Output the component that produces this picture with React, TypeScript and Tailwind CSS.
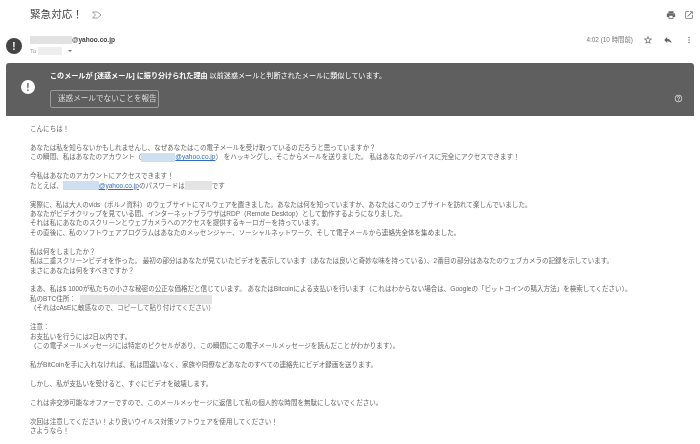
const jp = "font-['Liberation_Sans','Noto_Sans_CJK_JP',sans-serif]";

function Icon({ d, size, className }: { d: string; size: number; className: string }) {
  return (
    <svg width={size} height={size} viewBox="0 0 24 24" className={className} fill="currentColor">
      <path d={d} />
    </svg>
  );
}

const printPath = "M19 8H5c-1.66 0-3 1.34-3 3v6h4v4h12v-4h4v-6c0-1.66-1.34-3-3-3zm-3 11H8v-5h8v5zm3-7c-.55 0-1-.45-1-1s.45-1 1-1 1 .45 1 1-.45 1-1 1zm-1-9H6v4h12V3z";
const openPath = "M19 19H5V5h7V3H5c-1.11 0-2 .9-2 2v14c0 1.1.89 2 2 2h14c1.1 0 2-.9 2-2v-7h-2v7zM14 3v2h3.59l-9.83 9.83 1.41 1.41L19 6.41V10h2V3h-7z";
const starPath = "M22 9.24l-7.19-.62L12 2 9.19 8.63 2 9.24l5.46 4.73L5.82 21 12 17.27 18.18 21l-1.63-7.03L22 9.24zM12 15.4l-3.76 2.27 1-4.28-3.32-2.88 4.38-.38L12 6.1l1.71 4.04 4.38.38-3.32 2.88 1 4.28L12 15.4z";
const replyPath = "M10 9V5l-7 7 7 7v-4.1c5 0 8.5 1.6 11 5.1-1-5-4-10-11-11z";
const morePath = "M12 8c1.1 0 2-.9 2-2s-.9-2-2-2-2 .9-2 2 .9 2 2 2zm0 2c-1.1 0-2 .9-2 2s.9 2 2 2 2-.9 2-2-.9-2-2-2zm0 6c-1.1 0-2 .9-2 2s.9 2 2 2 2-.9 2-2-.9-2-2-2z";
const helpPath = "M11 18h2v-2h-2v2zm1-16C6.48 2 2 6.48 2 12s4.48 10 10 10 10-4.48 10-10S17.52 2 12 2zm0 18c-4.41 0-8-3.59-8-8s3.59-8 8-8 8 3.59 8 8-3.59 8-8 8zm0-14c-2.21 0-4 1.79-4 4h2c0-1.1.9-2 2-2s2 .9 2 2c0 2-3 1.75-3 5h2c0-2.25 3-2.5 3-5 0-2.21-1.79-4-4-4z";

function Alert({ size, bg, fg }: { size: string; bg: string; fg: string }) {
  return (
    <span className={`${size} ${bg} ${fg} flex items-center justify-center rounded-full font-bold`}>!</span>
  );
}

function Line({ children }: { children?: React.ReactNode }) {
  return <div className="h-[9.44px] whitespace-nowrap">{children}</div>;
}

function Blue({ w }: { w: string }) {
  return <span className={`inline-block h-[9px] align-middle bg-[#cfdff2] ${w}`} />;
}

function Link({ children }: { children: React.ReactNode }) {
  return <span className="text-[#2f6bc0] underline">{children}</span>;
}

export default function App() {
  return (
    <div className={`w-[700px] h-[444px] overflow-hidden bg-white text-[#666] blur-[0.3px] ${jp}`}>
      <div className="h-[29px] flex items-center pl-[30px] pr-[6px]">
        <span className="text-[10.6px] text-[#444]">緊急対応！</span>
        <svg width="10" height="8" viewBox="0 0 20 14" className="ml-[9px] text-[#888]" fill="none" stroke="currentColor" strokeWidth="1.6">
          <path d="M1 1h10l7 6-7 6H1l6-6z" />
        </svg>
        <div className="ml-auto flex items-center gap-[8px]">
          <Icon d={printPath} size={10} className="text-[#666]" />
          <Icon d={openPath} size={10} className="text-[#777]" />
        </div>
      </div>

      <div className="h-[34px] flex pl-[6px] pr-[6px]">
        <div className="pt-[9px]">
          <Alert size="w-[16px] h-[16px] text-[10px]" bg="bg-[#444]" fg="text-white" />
        </div>
        <div className="ml-[8px] pt-[6px]">
          <div className="h-[10px] flex items-center text-[6.6px] font-bold text-[#444]">
            <span className="inline-block w-[42px] h-[8px] bg-[#e2e2e2]" />
            @yahoo.co.jp
          </div>
          <div className="h-[10px] mt-[1px] flex items-center text-[6px] text-[#999]">
            To
            <span className="inline-block ml-[2px] w-[24px] h-[8px] bg-[#eeeeee]" />
            <span className="ml-[6px] w-0 h-0 border-x-[2px] border-x-transparent border-t-[2px] border-t-[#777]" />
          </div>
        </div>
        <div className="ml-auto flex items-start pt-[5px]">
          <span className="text-[6.4px] text-[#777] mr-[10px] leading-[12px]">4:02 (10 時間前)</span>
          <Icon d={starPath} size={10} className="text-[#666] mt-[1px]" />
          <Icon d={replyPath} size={10} className="text-[#666] ml-[10px] mt-[1px]" />
          <Icon d={morePath} size={10} className="text-[#777] ml-[11px] mt-[1px]" />
        </div>
      </div>

      <div className="mx-[6px] h-[53px] bg-[#5f5f5f] rounded-t-[3px] flex text-white relative">
        <div className="w-[44px] flex justify-center pt-[17px]">
          <Alert size="w-[14px] h-[14px] text-[10px]" bg="bg-white" fg="text-[#5f5f5f]" />
        </div>
        <div className="pt-[8px]">
          <div className="h-[10px] text-[7.1px] leading-[10px] whitespace-nowrap">
            <span className="font-bold">このメールが [迷惑メール] に振り分けられた理由</span> 以前迷惑メールと判断されたメールに類似しています。
          </div>
          <div className="mt-[9px] w-[109px] h-[18px] pl-[7px] border border-[#9a9a9a] rounded-[2px] flex items-center whitespace-nowrap text-[7.6px] text-[#dddddd]">
            迷惑メールでないことを報告
          </div>
        </div>
        <Icon d={helpPath} size={9} className="absolute right-[11px] top-[31px] text-[#ddd]" />
      </div>

      <div className="pl-[30px] pt-[8px] text-[6.55px] leading-[9.44px]">
        <Line>こんにちは！</Line>
        <Line />
        <Line>あなたは私を知らないかもしれませんし、なぜあなたはこの電子メールを受け取っているのだろうと思っていますか？</Line>
        <Line>この瞬間、私はあなたのアカウント（<Blue w="w-[34px]" /><Link>@yahoo.co.jp</Link>） をハッキングし、そこからメールを送りました。 私はあなたのデバイスに完全にアクセスできます！</Line>
        <Line />
        <Line>今私はあなたのアカウントにアクセスできます！</Line>
        <Line>たとえば、<Blue w="w-[36px]" /><Link>@yahoo.co.jp</Link>のパスワードは<span className="inline-block h-[9px] w-[27px] align-middle bg-[#e4e4e4]" />です</Line>
        <Line />
        <Line>実際に、私は大人のvids（ポルノ資料）のウェブサイトにマルウェアを置きました。あなたは何を知っていますか、あなたはこのウェブサイトを訪れて楽しんでいました。</Line>
        <Line>あなたがビデオクリップを見ている間、インターネットブラウザはRDP（Remote Desktop）として動作するようになりました。</Line>
        <Line>それは私にあなたのスクリーンとウェブカメラへのアクセスを提供するキーロガーを持っています。</Line>
        <Line>その直後に、私のソフトウェアプログラムはあなたのメッセンジャー、ソーシャルネットワーク、そして電子メールから連絡先全体を集めました。</Line>
        <Line />
        <Line>私は何をしましたか？</Line>
        <Line>私は二重スクリーンビデオを作った。 最初の部分はあなたが見ていたビデオを表示しています（あなたは良いと奇妙な味を持っている）、2番目の部分はあなたのウェブカメラの記録を示しています。</Line>
        <Line>まさにあなたは何をすべきですか？</Line>
        <Line />
        <Line>まあ、私は$ 1000が私たちの小さな秘密の公正な価格だと信じています。 あなたはBitcoinによる支払いを行います（これはわからない場合は、Googleの「ビットコインの購入方法」を検索してください）。</Line>
        <Line>私のBTC住所：<span className="inline-block h-[9px] w-[132px] ml-[4px] align-middle bg-[#e4e4e4]" /></Line>
        <Line>（それはcAsEに敏感なので、コピーして貼り付けてください）</Line>
        <Line />
        <Line>注意：</Line>
        <Line>お支払いを行うには2日以内です。</Line>
        <Line>（この電子メールメッセージには特定のピクセルがあり、この瞬間にこの電子メールメッセージを読んだことがわかります）。</Line>
        <Line />
        <Line>私がBitCoinを手に入れなければ、私は間違いなく、家族や同僚などあなたのすべての連絡先にビデオ録画を送ります。</Line>
        <Line />
        <Line>しかし、私が支払いを受けると、すぐにビデオを破壊します。</Line>
        <Line />
        <Line>これは非交渉可能なオファーですので、このメールメッセージに返信して私の個人的な時間を無駄にしないでください。</Line>
        <Line />
        <Line>次回は注意してください！より良いウイルス対策ソフトウェアを使用してください！</Line>
        <Line>さようなら！</Line>
      </div>
    </div>
  );
}
